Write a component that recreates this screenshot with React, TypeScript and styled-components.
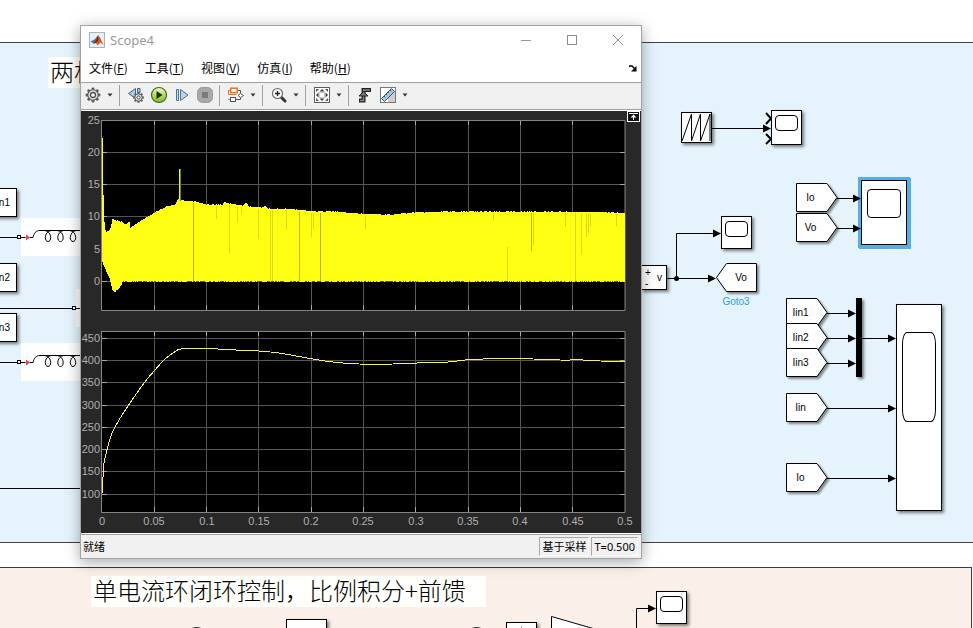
import React from 'react';
import styled, { createGlobalStyle } from 'styled-components';

const GlobalStyle = createGlobalStyle`
  * { box-sizing: border-box; }
  body { margin: 0; background: #fff; font-family: "Liberation Sans", "Noto Sans CJK SC", sans-serif; }
  button { font: inherit; color: inherit; background: none; border: 0; padding: 0; margin: 0; }
`;

/* ---------- model canvas ---------- */

const Canvas = styled.main`
  position: relative;
  display: flex;
  flex-direction: column;
  gap: 24px;
  height: 100vh;
  min-height: 600px;
  padding-top: 42px;
  overflow: hidden;
  background: #fff;
`;

const PowerArea = styled.section`
  flex: none;
  height: 501px;
  background: #e5f4fc;
  border: solid #3c4247;
  border-width: 1px 0;
`;

const ControlArea = styled.section`
  flex: 1;
  margin-right: 1px;
  background: #fbf0e9;
  border: solid #3c3c3c;
  border-width: 1px 1px 0 0;
`;

const Wires = styled.svg`
  position: absolute;
  inset: 0;
  width: 100%;
  height: 100%;
  overflow: visible;
`;

interface Box { $x: number; $y: number; $w: number; $h: number }

const Node = styled.div<Box>`
  position: absolute;
  left: ${p => p.$x}px;
  top: ${p => p.$y}px;
  width: ${p => p.$w}px;
  height: ${p => p.$h}px;
`;

const Block = styled(Node)<{ $selected?: boolean }>`
  display: flex;
  align-items: center;
  justify-content: center;
  font-size: 10px;
  background: #fff;
  border: 1px solid #000;
  box-shadow: ${p => (p.$selected ? '0 0 0 3px #57aee5, 1px 1px 0 3px #57aee5' : '2px 2px 3px rgba(0, 0, 0, 0.5)')};
`;

const MuxBar = styled(Block)`
  background: #000;
`;

const ScopeBlock = styled(Block)<{ $pad: number }>`
  align-items: flex-start;
  padding: ${p => p.$pad}px 3px 0;
`;

const Screen = styled.div<{ $h: number; $inset: number; $tall?: boolean }>`
  flex: 1;
  height: ${p => p.$h}px;
  margin: 0 ${p => p.$inset}px;
  border: 1px solid #000;
  border-radius: ${p => (p.$tall ? '5px / 12px' : '4px')};
`;

const InputBlock = styled(Block)`
  justify-content: flex-end;
  padding-right: 6px;
`;

const SensorBlock = styled(Block)`
  justify-content: space-between;
  padding: 0 4px 0 3px;
`;

const Signs = styled.span`
  display: flex;
  flex-direction: column;
  line-height: 11px;
`;

const TagNode = styled(Node)`
  display: grid;
  font-size: 10px;
  line-height: 30px;
  text-align: center;
  > * { grid-area: 1 / 1; }
`;

const TagShape = styled.svg`
  width: 42px;
  height: 30px;
  overflow: visible;
  filter: drop-shadow(2px 2px 1px rgba(0, 0, 0, 0.45));
`;

const TagText = styled.span<{ $left?: boolean }>`
  position: relative;
  padding: ${p => (p.$left ? '0 0 0 8px' : '0 13px 0 0')};
`;

const Caption = styled(Node)`
  color: #2a9ddb;
  font-size: 10px;
  line-height: 14px;
  text-align: center;
`;

const Heading = styled.h2<{ $x: number; $y: number; $w: number }>`
  position: absolute;
  left: ${p => p.$x}px;
  top: ${p => p.$y}px;
  width: ${p => p.$w}px;
  margin: 0;
  padding: 0 0 4px 2px;
  white-space: nowrap;
  font: 300 24px/27px "Noto Sans CJK SC", sans-serif;
  color: #000;
  background: #fffffb;
`;

const Tag = ({ x, y, text }: { x: number; y: number; text: string }) => (
  <TagNode $x={x} $y={y} $w={42} $h={30}>
    <TagShape viewBox="0 0 42 30">
      <path d="M.5 .5H31L41 14.5L31 28.5H.5Z" fill="#fff" stroke="#000" />
    </TagShape>
    <TagText>{text}</TagText>
  </TagNode>
);

const Scope = ({ x, y, w = 31, h = 33 }: { x: number; y: number; w?: number; h?: number }) => (
  <ScopeBlock $x={x} $y={y} $w={w} $h={h} $pad={4}>
    <Screen $h={16} $inset={0} />
  </ScopeBlock>
);

const Wire = ({ d }: { d: string }) => <path d={d} fill="none" stroke="#000" />;
const Arrow = ({ x, y }: { x: number; y: number }) => (
  <path d={`M${x} ${y}l-8 -4v8z`} fill="#000" />
);
const Signal = ({ from, to, y }: { from: number; to: number; y: number }) => (
  <g>
    <Wire d={`M${from} ${y}H${to - 4}`} />
    <Arrow x={to} y={y} />
  </g>
);

const Inductor = ({ y }: { y: number }) => (
  <g transform={`translate(0 ${y})`}>
    <rect x="21" y="-19" width="70" height="38" fill="#fff" />
    <path d="M0 .5H33C34 -4 36 -6.5 40 -6.5H90" fill="none" stroke="#000" />
    <path d="M25 .5H30" stroke="#e8424e" />
    <path d="M26 -2.5l4 3l-4 3z" fill="#e8424e" />
    <rect x="17.5" y="-1.5" width="3" height="3" fill="#fff" stroke="#000" />
    {[48, 60.5, 73].map(x => (
      <path key={x} d={`M${x - 3} -6.500C${x + 4} -5 ${x + 4} 4.500 ${x} 4.500C${x - 4} 4.500 ${x - 4} -5 ${x + 3} -6.500`} fill="none" stroke="#000" />
    ))}
  </g>
);

/* ---------- scope window ---------- */

const Window = styled.section`
  position: absolute;
  left: 80px;
  top: 25px;
  width: 562px;
  display: flex;
  flex-direction: column;
  background: #fff;
  border: 1px solid #a3a3a3;
  box-shadow: 0 3px 14px rgba(0, 0, 0, 0.35);
`;

const TitleBar = styled.header`
  display: flex;
  align-items: center;
  height: 28px;
  padding-left: 8px;
  gap: 5px;
  font: 13px/18px "Noto Sans", sans-serif;
  color: #999;
`;

const Title = styled.h1`
  flex: 1;
  margin: 0;
  font: inherit;
`;

const WindowButtons = styled.div`
  display: flex;
`;

const WindowButton = styled.button`
  display: grid;
  place-items: center;
  width: 46px;
  height: 28px;
`;

const MenuBar = styled.nav`
  display: flex;
  align-items: center;
  gap: 1px;
  height: 28px;
  color: #000;
  font: 12px/18px "Noto Sans CJK SC", sans-serif;
`;

const MenuItem = styled.button`
  padding: 0 8px;
  white-space: nowrap;
`;

const DockButton = styled.button`
  display: grid;
  margin-left: auto;
  margin-right: 4px;
`;

const ToolBar = styled.div`
  display: flex;
  align-items: flex-start;
  height: 28px;
  background: #f0f0f0;
  border: solid #a0a0a0;
  border-width: 1px 0;
`;

const ToolButton = styled.button`
  display: grid;
  place-items: center;
  width: 23px;
  height: 24px;
`;

const CaretButton = styled(ToolButton)`
  width: 12px;
`;

const Separator = styled.span`
  width: 1px;
  height: 21px;
  margin: 2px 4px 0 3px;
  background: #a0a0a0;
`;

const Icon = styled.svg`
  display: block;
  width: 18px;
  height: 18px;
`;

const PlotPane = styled.div`
  position: relative;
  margin-top: 1px;
  background: #282828;
`;

const Plot = styled.svg`
  display: block;
  width: 100%;
  font: 11px "Liberation Sans", Arial, sans-serif;
`;

const ExpandButton = styled.button`
  position: absolute;
  top: 0;
  right: 1px;
  display: grid;
`;

const StatusBar = styled.footer`
  display: flex;
  align-items: center;
  gap: 2px;
  height: 24px;
  margin-top: 1px;
  padding: 0 3px 0 2px;
  background: #f0f0f0;
  border-top: 1px solid #a0a0a0;
  font: 11px/17px "Noto Sans", "Noto Sans CJK SC", sans-serif;
  color: #000;
`;

const StatusText = styled.span`
  flex: 1;
`;

const StatusCell = styled.span`
  height: 19px;
  padding: 0 2px;
  border: 1px solid #a8a8a8;
  border-right-color: #fff;
  border-bottom-color: #fff;
  white-space: nowrap;
`;

const Caret = ({ label }: { label: string }) => (
  <CaretButton aria-label={label}>
    <svg width="6" height="4" viewBox="0 0 6 4"><path d="M.5 .5h5L3 3.5z" fill="#333" /></svg>
  </CaretButton>
);

const teeth = [0, 45, 90, 135, 180, 225, 270, 315];

const GearIcon = () => (
  <Icon viewBox="0 0 18 18">
    {teeth.map(a => (
      <rect key={a} x="7.6" y="1.6" width="2.8" height="4" rx="1" fill="#5a5a5a" transform={`rotate(${a} 9 9)`} />
    ))}
    <circle cx="9" cy="9" r="5.2" fill="#e2e2e2" stroke="#5a5a5a" strokeWidth="1.1" />
    <circle cx="9" cy="9" r="2.5" fill="#fafafa" stroke="#4d4d4d" strokeWidth="1.3" />
  </Icon>
);

const StepBackIcon = () => (
  <Icon viewBox="0 0 18 18">
    <path d="M8.5 2.5L1.5 7.5L8.5 12.5Z" fill="#a9cbe4" stroke="#3f6684" />
    <path d="M10.5 2.5h2.5v4h-2.5z" fill="#a9cbe4" stroke="#3f6684" />
    {teeth.map(a => (
      <rect key={a} x="10.4" y="6.2" width="2.2" height="3" fill="#5a5a5a" transform={`rotate(${a} 11.5 11.5)`} />
    ))}
    <circle cx="11.5" cy="11.5" r="3.7" fill="#e4e4e4" stroke="#5a5a5a" />
    <circle cx="11.5" cy="11.5" r="1.6" fill="#fff" stroke="#4d4d4d" />
  </Icon>
);

const RunIcon = () => (
  <Icon viewBox="0 0 18 18">
    <defs>
      <linearGradient id="run" x1="0" y1="0" x2="0" y2="1">
        <stop offset="0" stopColor="#f0f9cf" />
        <stop offset="0.5" stopColor="#b5dc60" />
        <stop offset="1" stopColor="#7cb82f" />
      </linearGradient>
    </defs>
    <circle cx="9" cy="9" r="7.5" fill="url(#run)" stroke="#3c6b1c" strokeWidth="1.2" />
    <path d="M6.5 5L12.500 9L6.5 13Z" fill="#202820" />
  </Icon>
);

const StepIcon = () => (
  <Icon viewBox="0 0 18 18">
    <path d="M3.5 3.5h2v11h-2z" fill="#cfe2f0" stroke="#4c7391" />
    <path d="M7.5 3.5L15 9L7.5 14.5Z" fill="#b8d5ea" stroke="#4c7391" />
  </Icon>
);

const StopIcon = () => (
  <Icon viewBox="0 0 18 18">
    <rect x="1.500" y="1.500" width="15" height="15" rx="5" fill="#a8a8a8" stroke="#9a9a9a" />
    <rect x="6" y="6" width="6" height="6" fill="#7b7b7b" />
  </Icon>
);

const BlocksIcon = () => (
  <Icon viewBox="0 0 18 18">
    <path d="M10.500 4.500H13.500V7.500M9 13.500H13.500V11.500" fill="none" stroke="#555" />
    <path d="M1 4.500H4M1.500 4.500V8.500H9.500M1 13.500H3" fill="none" stroke="#e87722" />
    <rect x="3.700" y="2.200" width="6.500" height="4.500" fill="#fff" stroke="#e87722" strokeWidth="1.500" />
    <rect x="3.500" y="11.500" width="5" height="4" fill="#fff" stroke="#555" />
    <path d="M11 9.500L13.500 7.500L16.500 9.500L13.500 11.500Z" fill="#fff" stroke="#555" />
  </Icon>
);

const ZoomIcon = () => (
  <Icon viewBox="0 0 18 18">
    <path d="M11.500 11.500L15 15" stroke="#333" strokeWidth="3" strokeLinecap="round" />
    <circle cx="7.5" cy="7.5" r="5" fill="#f4f9fc" stroke="#666" strokeWidth="1.1" />
    <path d="M5 7.5h5M7.5 5v5" stroke="#222" strokeWidth="1.3" />
  </Icon>
);

const FitIcon = () => (
  <Icon viewBox="0 0 18 18">
    <rect x="1.5" y="1.5" width="15" height="15" fill="#fff" stroke="#5c5c5c" />
    <rect x="6.5" y="6.5" width="5" height="5" fill="none" stroke="#999" strokeDasharray="1 1" />
    {[0, 90, 180, 270].map(a => (
      <path key={a} d="M9 3L11.500 5.500H6.500Z" fill="#3c3c3c" transform={`rotate(${a} 9 9)`} />
    ))}
    {[0, 90, 180, 270].map(a => (
      <path key={a} d="M3 6V3H6Z" fill="#555" transform={`rotate(${a} 9 9)`} />
    ))}
  </Icon>
);

const TriggerIcon = () => (
  <Icon viewBox="0 0 18 18">
    <path d="M3 14.5H7.500V4H15" fill="none" stroke="#222" strokeWidth="4" />
    <path d="M4 14.5H7.500V4H14" fill="none" stroke="#888" strokeWidth="1.4" />
    <path d="M3 10L7.500 5.500L12 10Z" fill="#777" stroke="#222" />
  </Icon>
);

const RulerIcon = () => (
  <Icon viewBox="0 0 18 18">
    <rect x="1.5" y="1.5" width="15" height="15" fill="#fff" stroke="#777" />
    <path d="M9 16V12L16 5V16Z" fill="#cfcfcf" />
    <path d="M2.5 12.5L12.5 2.5L15.5 5.5L5.5 15.5Z" fill="#a9cee4" stroke="#345266" />
    <path d="M5 10l1.3 1.3M7 8l1.3 1.3M9 6l1.3 1.3M11 4l1.3 1.3" stroke="#345266" />
  </Icon>
);

const MatlabIcon = () => (
  <svg width="16" height="16" viewBox="0 0 16 16">
    <rect x=".5" y=".5" width="15" height="15" fill="#e9f0f5" stroke="#a7b4be" />
    <path d="M1.5 9.5L5.5 7.5L8.5 4L7.5 9L4.5 11.5Z" fill="#3e78a8" />
    <path d="M4.5 11.5L7 8.5L9 3L11 5.5L14.5 13L11.5 10.5L8.5 13.5L7 11Z" fill="#d9591c" />
    <path d="M9 3L9.5 8L7 11L4.5 11.5L7 8.5Z" fill="#6b2a16" />
  </svg>
);

/* ---------- plot data (canvas coordinates, shifted by LEFT/TOP into the pane) ---------- */

const LEFT = 81;
const TOP = 111;

type Point = [number, number];

const envelopeTop: Point[] = [
  [102, 138], [103, 195], [104, 222], [105, 230], [106, 232], [109, 231], [111, 225], [112, 219], [116, 221],
  [121, 222], [125, 225], [129, 222], [130, 228], [139, 222], [156, 212], [166, 207], [175, 205], [177, 200],
  [179, 199], [182, 201], [196, 202], [206, 205], [222, 205], [224, 202], [229, 204], [242, 206], [245, 203],
  [249, 207], [263, 208], [265, 206], [268, 209], [286, 209], [316, 212], [336, 212], [357, 214], [390, 215],
  [413, 213], [443, 212], [543, 212], [625, 213],
];
const envelopeBottom: Point[] = [
  [102, 261], [104, 267], [109, 277], [111, 286], [114, 291], [118, 288], [121, 285], [122, 281], [625, 281],
];
const voltage: Point[] = [
  [102, 493], [103, 477], [104, 463], [107, 450], [110, 439], [113, 431], [119, 420], [128, 406], [144, 383],
  [155, 370], [165, 359], [176, 351], [181, 349], [200, 349], [218, 349], [236, 350], [259, 351], [279, 353],
  [296, 356], [313, 359], [333, 362], [359, 364], [393, 364], [417, 363], [448, 362], [465, 360], [483, 359],
  [508, 359], [533, 359], [560, 360], [583, 360], [600, 361], [625, 361],
];

const at = (points: Point[], x: number) => {
  const i = Math.max(1, points.findIndex(p => p[0] >= x));
  const [x0, y0] = points[i - 1];
  const [x1, y1] = points[i];
  return y0 + ((y1 - y0) * (x - x0)) / (x1 - x0);
};
const noise = (x: number) => {
  const v = Math.sin(x * 12.9898) * 43758.5453;
  return v - Math.floor(v);
};
const smooth = (points: Point[]) =>
  points.slice(1).reduce((d, [x, y], i) => {
    const [ax, ay] = points[Math.max(0, i - 1)];
    const [bx, by] = points[i];
    const [cx, cy] = points[Math.min(points.length - 1, i + 2)];
    return `${d}C${bx + (x - ax) / 6} ${by + (y - ay) / 6} ${x - (cx - bx) / 6} ${y - (cy - by) / 6} ${x} ${y}`;
  }, `M${points[0][0]} ${points[0][1]}`);

const columns = Array.from({ length: 523 }, (_, i) => 102 + i);
const envelope = columns
  .map(x => {
    const top = Math.round(at(envelopeTop, x) - (x > 105 ? noise(x) * 0.8 : 0));
    const bottom = Math.round(at(envelopeBottom, x) + noise(x + 0.5) * (x < 122 ? 2 : 1));
    return `M${x - LEFT} ${top - TOP}h1V${bottom - TOP}h-1z`;
  })
  .join('');

const notches: [number, number, number][] = [
  [193, 203, 281], [216, 206, 219], [229, 205, 253], [237, 207, 222], [241, 207, 214], [258, 209, 239],
  [270, 210, 281], [272, 210, 281], [286, 210, 229], [299, 212, 281], [311, 213, 237], [313, 213, 229],
  [320, 213, 281], [365, 216, 229], [493, 213, 220], [507, 247, 281], [531, 213, 251], [533, 213, 245],
  [565, 213, 227], [575, 213, 281], [581, 214, 254], [586, 214, 237], [588, 214, 233], [590, 214, 226],
  [616, 214, 226],
];
const strong = [193, 299, 320, 531];
const gridX = [154, 206, 258, 311, 363, 415, 468, 520, 572];
const timeTicks: [number, string][] = [
  [102, '0'], [154, '0.05'], [207, '0.1'], [259, '0.15'], [311, '0.2'], [363, '0.25'],
  [416, '0.3'], [468, '0.35'], [520, '0.4'], [573, '0.45'], [625, '0.5'],
];

const Axes = ({ top, bottom, rows, children }: {
  top: number; bottom: number; rows: [number, string][]; children: React.ReactNode;
}) => (
  <g>
    <g transform={`translate(${-LEFT} ${-TOP})`}>
      <rect x="102" y={top} width="523" height={bottom - top} fill="#000" />
      <g stroke="#565656">
        {gridX.map(x => <path key={x} d={`M${x + 0.5} ${top}V${bottom}`} />)}
        {rows.map(([y]) => <path key={y} d={`M102 ${y + 0.5}H625`} />)}
      </g>
      <g stroke="#a8a8a8">
        {gridX.map(x => <path key={x} d={`M${x + 0.5} ${top}v5M${x + 0.5} ${bottom}v-5`} />)}
        {rows.map(([y]) => <path key={y} d={`M102 ${y + 0.5}h5M625 ${y + 0.5}h-5`} />)}
      </g>
      <path d={`M101.500 ${top}V${bottom + 0.5}H625V${top + 0.5}H102`} fill="none" stroke="#858585" />
    </g>
    {children}
    <g fill="#afafaf" textAnchor="end">
      {rows.map(([y, label]) => <text key={y} x={19} y={y - TOP + 4}>{label}</text>)}
    </g>
  </g>
);

const ScopePlot = () => (
  <Plot viewBox="0 0 560 422" role="img" aria-label="Scope4">
    <Axes top={120} bottom={310} rows={[[120, '25'], [152, '20'], [184, '15'], [216, '10'], [249, '5'], [281, '0']]}>
      <path d={envelope} fill="#ffff14" shapeRendering="crispEdges" />
      <path d="M98.5 90V58" stroke="#f2f22c" />
      <path d="M99.5 90V58" stroke="#77771c" />
      <g>
        {notches.map(([x, a, b]) => (
          <path key={x} d={`M${x - LEFT + 0.5} ${a - TOP}V${b - TOP}`} stroke={strong.includes(x) ? '#b9b40c' : '#dcd80f'} />
        ))}
      </g>
    </Axes>
    <Axes
      top={331}
      bottom={512}
      rows={[[338, '450'], [360, '400'], [382, '350'], [405, '300'], [427, '250'], [449, '200'], [471, '150'], [494, '100']]}
    >
      <path
        d={smooth(voltage)}
        transform={`translate(${-LEFT} ${-TOP})`}
        fill="none"
        stroke="#f4f452"
        shapeRendering="crispEdges"
      />
    </Axes>
    <g fill="#afafaf" textAnchor="middle">
      {timeTicks.map(([x, label]) => <text key={label} x={x - LEFT} y={414}>{label}</text>)}
    </g>
  </Plot>
);

const menus = [['文件', 'F'], ['工具', 'T'], ['视图', 'V'], ['仿真', 'I'], ['帮助', 'H']];

const ScopeWindow = () => (
  <Window>
    <TitleBar>
      <MatlabIcon />
      <Title>Scope4</Title>
      <WindowButtons>
        <WindowButton aria-label="Minimize">
          <svg width="12" height="12"><path d="M1 6.5h10" stroke="#999" /></svg>
        </WindowButton>
        <WindowButton aria-label="Maximize">
          <svg width="12" height="12"><rect x="1.5" y="1.5" width="9" height="9" fill="none" stroke="#8c8c8c" /></svg>
        </WindowButton>
        <WindowButton aria-label="Close">
          <svg width="12" height="12"><path d="M1 1L11 11M11 1L1 11" stroke="#8c8c8c" /></svg>
        </WindowButton>
      </WindowButtons>
    </TitleBar>
    <MenuBar>
      {menus.map(([name, key]) => (
        <MenuItem key={key}>{name}(<u>{key}</u>)</MenuItem>
      ))}
      <DockButton aria-label="Dock">
        <svg width="8" height="7" viewBox="0 0 8 7">
          <path d="M0 2V1H3L5.5 3.5" fill="none" stroke="#000" strokeWidth="1.4" />
          <path d="M7.5 1V6.5H2Z" fill="#000" />
        </svg>
      </DockButton>
    </MenuBar>
    <ToolBar role="toolbar">
      <ToolButton aria-label="Configuration"><GearIcon /></ToolButton>
      <Caret label="Configuration options" />
      <Separator />
      <ToolButton aria-label="Step back"><StepBackIcon /></ToolButton>
      <ToolButton aria-label="Run"><RunIcon /></ToolButton>
      <ToolButton aria-label="Step forward"><StepIcon /></ToolButton>
      <ToolButton aria-label="Stop"><StopIcon /></ToolButton>
      <Separator />
      <ToolButton aria-label="Highlight block"><BlocksIcon /></ToolButton>
      <Caret label="Highlight options" />
      <Separator />
      <ToolButton aria-label="Zoom"><ZoomIcon /></ToolButton>
      <Caret label="Zoom options" />
      <Separator />
      <ToolButton aria-label="Scale axes"><FitIcon /></ToolButton>
      <Caret label="Scale options" />
      <Separator />
      <ToolButton aria-label="Trigger"><TriggerIcon /></ToolButton>
      <ToolButton aria-label="Measurements"><RulerIcon /></ToolButton>
      <Caret label="Measurement options" />
    </ToolBar>
    <PlotPane>
      <ScopePlot />
      <ExpandButton aria-label="Maximize axes">
        <svg width="13" height="11" viewBox="0 0 13 11">
          <rect x=".5" y=".5" width="12" height="10" fill="#111" stroke="#fff" />
          <path d="M2 2.5h9M6.5 9V4" stroke="#fff" />
          <path d="M6.5 3.5L9.500 6.500H3.500Z" fill="#fff" />
        </svg>
      </ExpandButton>
    </PlotPane>
    <StatusBar>
      <StatusText>就绪</StatusText>
      <StatusCell>基于采样</StatusCell>
      <StatusCell>T=0.500</StatusCell>
    </StatusBar>
  </Window>
);

export default function App() {
  return (
    <>
      <GlobalStyle />
      <Canvas>
        <PowerArea />
        <ControlArea />

        <ScopeBlock $x={861} $y={180} $w={46} $h={65} $pad={8} $selected>
          <Screen $h={29} $inset={2} />
        </ScopeBlock>

        <Wires>
          <Inductor y={237} />
          <rect x="76" y="289" width="10" height="38" fill="#fff" />
          <Wire d="M0 308.5H90" />
          <rect x="72.5" y="306.5" width="3" height="3" fill="#fff" stroke="#000" />
          <Inductor y={362} />
          <Wire d="M0 488.5H90" />
          <Signal from={712} to={771} y={128.5} />
          <path d="M766 113L771 118.5L766 124M766 134L771 139L766 144" fill="none" stroke="#000" strokeWidth="2" />
          <Wire d="M676.5 278V233.5H714" />
          <Arrow x={721} y={233.5} />
          <Signal from={667} to={716} y={278.5} />
          <circle cx="676.5" cy="278.5" r="2.5" />
          <Signal from={837} to={861} y={198.5} />
          <Signal from={837} to={861} y={228.5} />
          <Signal from={827} to={856} y={313.5} />
          <Signal from={827} to={856} y={338.5} />
          <Signal from={827} to={856} y={363.5} />
          <Signal from={862} to={896} y={338.5} />
          <Signal from={827} to={896} y={408.5} />
          <Signal from={827} to={896} y={478.5} />
          <Wire d="M636.5 640V608.5H649" />
          <Arrow x={656} y={608.5} />
          <g fill="#fff" stroke="#000">
            <circle cx="196.5" cy="637.5" r="10" />
            <circle cx="476.5" cy="637.5" r="10" />
            <path d="M551.5 660V616.5L640 642Z" />
          </g>
        </Wires>

        <Heading $x={48} $y={57} $w={52}>两相</Heading>
        <Heading $x={91} $y={576} $w={395}>单电流环闭环控制，比例积分+前馈</Heading>

        <InputBlock $x={-24} $y={188} $w={41} $h={29}>In1</InputBlock>
        <InputBlock $x={-24} $y={263} $w={41} $h={29}>In2</InputBlock>
        <InputBlock $x={-24} $y={313} $w={41} $h={29}>In3</InputBlock>

        <Block $x={681} $y={112} $w={31} $h={31}>
          <svg width="29" height="29" viewBox="0 0 29 29">
            <path d="M0 28L9.5 1V28L18.5 1V28L28 1V28" fill="none" stroke="#000" />
          </svg>
        </Block>
        <Scope x={771} y={110} h={35} />
        <Scope x={721} y={216} />
        <SensorBlock $x={641} $y={265} $w={26} $h={25}>
          <Signs><span>+</span><span>-</span></Signs>
          <span>v</span>
        </SensorBlock>
        <TagNode $x={716} $y={263} $w={42} $h={30}>
          <TagShape viewBox="0 0 42 30">
            <path d="M.5 14.5L10.5 .5H40.5V28.5H10.5Z" fill="#fff" stroke="#000" />
          </TagShape>
          <TagText $left>Vo</TagText>
        </TagNode>
        <Caption $x={711} $y={295} $w={50} $h={14}>Goto3</Caption>

        <Tag x={796} y={183} text="Io" />
        <Tag x={796} y={213} text="Vo" />

        <Tag x={786} y={298} text="Iin1" />
        <Tag x={786} y={323} text="Iin2" />
        <Tag x={786} y={348} text="Iin3" />
        <Tag x={786} y={393} text="Iin" />
        <Tag x={786} y={463} text="Io" />
        <MuxBar $x={856} $y={298} $w={6} $h={79} />
        <ScopeBlock $x={896} $y={304} $w={46} $h={207} $pad={27}>
          <Screen $h={90} $inset={2} $tall />
        </ScopeBlock>

        <Block $x={286} $y={619} $w={41} $h={30} />
        <Block $x={506} $y={622} $w={31} $h={30}>
          <svg width="29" height="28"><path d="M14.5 3V28" stroke="#999" /></svg>
        </Block>
        <Scope x={656} y={591} />

        <ScopeWindow />
      </Canvas>
    </>
  );
}
